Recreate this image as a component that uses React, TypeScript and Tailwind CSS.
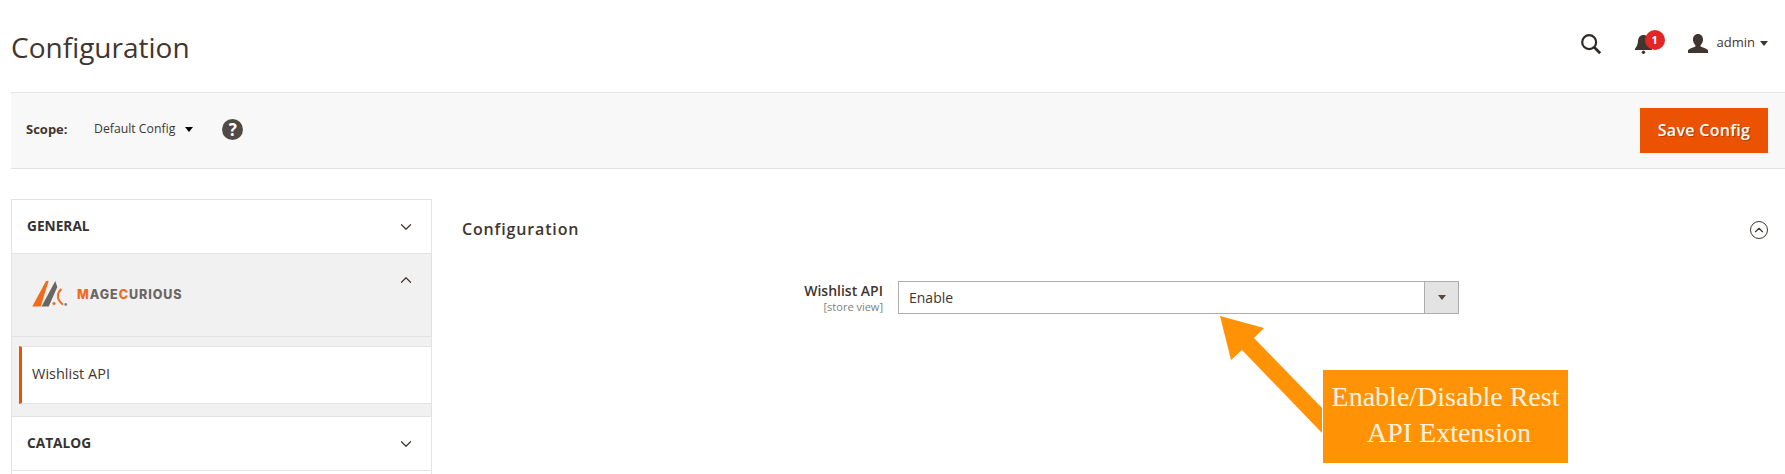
import { ChevronDown, ChevronUp } from "lucide-react";

const font = "font-['Open_Sans',sans-serif]";

function Caret({ className }: { className: string }) {
  return <span className={`inline-block h-0 w-0 border-x-[4px] border-t-[5px] border-x-transparent ${className}`} />;
}

function Logo() {
  return (
    <div className="flex items-center gap-[9px]">
      <svg width="36" height="28" viewBox="0 0 36 28">
        <polygon points="0.3,26.5 8.7,26.5 16.7,0.7 14,1" fill="#f26a1b" />
        <polygon points="9.5,26.5 16.7,26.5 25.3,7 23.3,1" fill="#6b6664" />
        <circle cx="22" cy="23.5" r="1.6" fill="#f26a1b" />
        <path d="M29.3 9 C25 13 24 19 31 24.7" fill="none" stroke="#f26a1b" strokeWidth="2" />
        <circle cx="33.7" cy="24.5" r="1.4" fill="#8a8583" />
      </svg>
      <span className="mt-[3px] font-['Inter',sans-serif] text-[12.5px] font-extrabold tracking-[0.95px] text-[#6b6664]">
        <span className="text-[#f26a1b]">M</span>AGE
        <span className="text-[#f26a1b]">C</span>URIOUS
      </span>
    </div>
  );
}

function SideSection({ title }: { title: string }) {
  return (
    <div className="flex h-[54px] items-center justify-between border-x border-b border-[#e3e3e3] bg-white pl-[15px] pr-4">
      <span className="mb-[1px] text-[13.7px] font-bold text-[#333]">{title}</span>
      <ChevronDown size={18} strokeWidth={1.6} className="text-[#41362f]" />
    </div>
  );
}

export default function App() {
  return (
    <div className={`relative h-[474px] overflow-hidden bg-white ${font} text-[#41362f]`}>
      <header className="flex h-[92px] items-center justify-between pl-[11px] pr-[17px]">
        <h1 className="mt-[2px] text-[28px] font-normal leading-none">Configuration</h1>
        <div className="mb-[6px] flex items-center">
          <svg width="22" height="22" viewBox="0 0 24 24" fill="none" stroke="#2f2a27" strokeWidth="2.4" className="mr-[33px] mt-[2px]">
            <circle cx="10" cy="10" r="7.6" />
            <path d="M15.5 15.5 22 22" strokeWidth="3" />
          </svg>
          <div className="relative mr-[33px] h-6 w-[20px]">
            <svg width="17" height="19" viewBox="0 0 17 19" className="absolute left-0 top-[4px]" fill="#41362f">
              <path d="M8.5 0C5 0 3.2 2.6 3 6 2.8 9.5 1.6 12 0 13.8V15h17v-1.2c-1.6-1.8-2.8-4.3-3-7.8C13.8 2.6 12 0 8.5 0Z" />
              <circle cx="8.5" cy="17.3" r="1.7" />
            </svg>
            <span className="absolute -top-[1px] left-[10px] flex h-5 w-5 items-center justify-center rounded-full bg-[#e22626] text-[11px] font-bold text-white">1</span>
          </div>
          <svg width="20" height="19" viewBox="0 0 20 19" fill="#41362f" className="mr-[9px]">
            <path d="M10 0c3 0 5 2.2 5 5.6 0 2.4-1 4.4-2.4 5.6v1.4c1.8.9 6 2 7.4 3.6V19H0v-2.8c1.4-1.6 5.6-2.7 7.4-3.6v-1.4C6 10 5 8 5 5.6 5 2.2 7 0 10 0Z" />
          </svg>
          <span className="mr-[5px] text-[13px]">admin</span>
          <Caret className="border-t-[#41362f]" />
        </div>
      </header>

      <div className="ml-[11px] flex h-[77px] items-center justify-between border-y border-[#e3e3e3] bg-[#f8f8f8] pl-[15px] pr-[17px]">
        <div className="mb-[2px] flex items-center">
          <span className="w-[68px] text-[13px] font-bold">Scope:</span>
          <span className="mr-[10px] text-[12.25px]">Default Config</span>
          <Caret className="border-t-black" />
          <span className="ml-[29px] flex h-[21px] w-[21px] items-center justify-center rounded-full bg-[#514943] text-[17px] font-bold leading-none text-white">?</span>
        </div>
        <button className="h-[45px] w-[128px] bg-[#eb5202] pb-[1px] text-base font-semibold tracking-[0.3px] text-white [text-shadow:1px_1px_0_rgba(0,0,0,0.25)]">
          Save Config
        </button>
      </div>

      <div className="ml-[11px] mt-[30px] flex">
        <aside className="w-[421px] shrink-0">
          <div className="border-t border-[#e3e3e3]">
            <SideSection title="GENERAL" />
          </div>
          <div className="flex h-[83px] items-start justify-between border-x border-b border-[#e3e3e3] bg-[#f1f1f1] pl-5 pr-4">
            <div className="mt-[26px]"><Logo /></div>
            <ChevronUp size={18} strokeWidth={1.6} className="mt-[17px] text-[#41362f]" />
          </div>
          <div className="border-x border-[#e3e3e3] bg-[#f1f1f1] pt-[9px]">
            <div className="ml-[7px] flex h-[58px] items-center border-y border-r-0 border-[#e3e3e3] border-l-[3px] border-l-[#eb5202] bg-white pb-[2px] pl-[10px] text-[14.5px]">
              Wishlist API
            </div>
            <div className="h-[13px] border-b border-[#e3e3e3]" />
          </div>
          <SideSection title="CATALOG" />
          <div className="h-10 border-x border-[#e3e3e3]" />
        </aside>

        <main className="ml-[30px] flex-1 pr-[17px]">
          <div className="flex items-center justify-between pt-[18px]">
            <h2 className="text-base font-semibold tracking-[0.85px]">Configuration</h2>
            <span className="mt-[2px] flex h-[18px] w-[18px] items-center justify-center rounded-full border border-[#41362f]">
              <ChevronUp size={14} strokeWidth={2} />
            </span>
          </div>
          <div className="mt-[39px] flex items-start">
            <div className="w-[436px] pr-[15px] pt-[2px] text-right">
              <div className="text-sm font-semibold leading-[18px]">Wishlist API</div>
              <div className="text-[11px] leading-[14px] text-[#808080]">[store view]</div>
            </div>
            <div className="mt-[1px] flex h-[33px] w-[561px] items-center justify-between border border-[#adadad] bg-white pl-[10px] text-sm">
              Enable
              <span className="flex h-full w-[34px] items-center justify-center border-l border-[#adadad] bg-[#e3e3e3]">
                <Caret className="border-t-[#514943]" />
              </span>
            </div>
          </div>
        </main>
      </div>

      {/* annotation laid over the page */}
      <svg width="110" height="125" viewBox="0 0 110 125" className="absolute left-[1218px] top-[315px]">
        <polygon points="2,1 46,13 36,23 104,93 104,118 24,35 13,45" fill="#ff9305" />
      </svg>
      <div className="absolute left-[1323px] top-[370px] flex h-[93px] w-[245px] items-center justify-center bg-[#ff9305] pb-[3px] text-center font-['Liberation_Serif',serif] text-[28px] leading-[36px] text-[#fff3e0]">
        <div>
          Enable/Disable Rest<br />
          <span className="ml-[7px]">API Extension</span>
        </div>
      </div>
    </div>
  );
}
